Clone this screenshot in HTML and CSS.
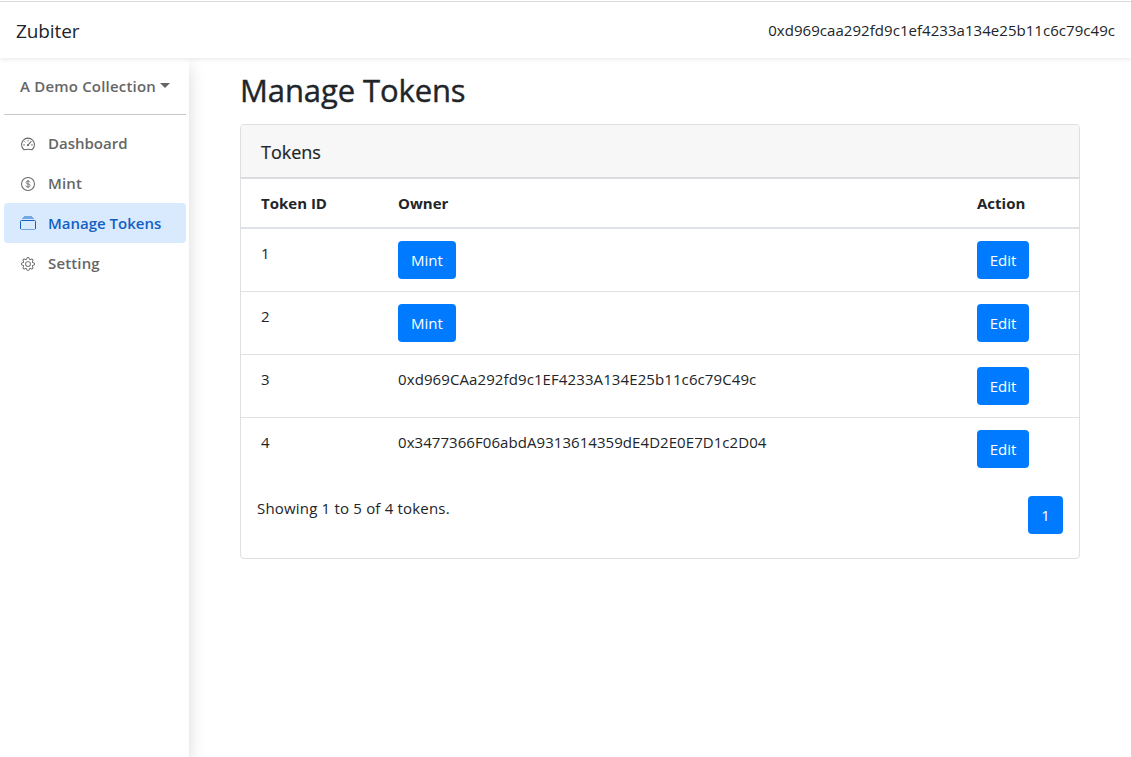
FILE: index.html
```html
<!DOCTYPE html>
<html lang="en">
<head>
<meta charset="utf-8">
<title>Zubiter</title>
<link rel="stylesheet" href="styles.css">
</head>
<body>
<header class="navbar">
  <a class="brand">Zubiter</a>
  <span class="account">0xd969caa292fd9c1ef4233a134e25b11c6c79c49c</span>
</header>
<div class="layout">
  <aside class="sidebar">
    <div class="collection"><span class="collection-name">A Demo Collection</span><i class="caret"></i></div>
    <nav class="menu">
      <a class="item">
        <svg class="icon" viewBox="0 0 16 16" fill="none" stroke="currentColor" stroke-linecap="round"><path d="M3.400 14.500C1.700 13.400.6 11.200.6 8.700a7.400 7.400 0 0 1 14.800 0c0 2.500-1.100 4.700-2.800 5.800-2.800-.7-6.400-.7-9.200 0z" stroke-width="1.200"/><path d="M8 3.700v1M4.300 5.300l.7.7M2.900 9h1.200M11.900 9h1.200"/><path d="M7.900 9.300l3.600-4" stroke-width="1.200"/><circle cx="7.800" cy="9.400" r=".6" fill="currentColor"/></svg>
        <span>Dashboard</span></a>
      <a class="item">
        <svg class="icon" viewBox="0 0 16 16" fill="none" stroke="currentColor"><circle cx="8" cy="8" r="7.400" stroke-width="1.150"/><path d="M10.200 6.100C10 5 9.100 4.500 8 4.500c-1.300 0-2.200.6-2.200 1.600 0 2.500 4.600 1.200 4.600 3.700 0 1.100-1 1.700-2.400 1.700-1.400 0-2.300-.7-2.400-1.800M8 3.500v9"/></svg>
        <span class="mint">Mint</span></a>
      <a class="item active">
        <svg class="icon icon-stack" viewBox="0 0 16 16"><path class="stack-lid" d="M4 1h8v1H4zM3 2h10v1h1v1H2V3h1z"/><path class="stack-box" d="M.5 14V6.500Q.5 5.500 1.500 5.500h13q1 0 1 1V14"/><path class="stack-lid" d="M1 14h14v1H1z"/></svg>
        <span>Manage Tokens</span></a>
      <a class="item">
        <svg class="icon" viewBox="0 0 16 16" fill="currentColor"><path d="M8 4.754a3.246 3.246 0 1 0 0 6.492 3.246 3.246 0 0 0 0-6.492zM5.754 8a2.246 2.246 0 1 1 4.492 0 2.246 2.246 0 0 1-4.492 0z"/><path d="M9.796 1.343c-.527-1.790-3.065-1.790-3.592 0l-.094.319a.873.873 0 0 1-1.255.520l-.292-.160c-1.640-.892-3.433.902-2.540 2.541l.159.292a.873.873 0 0 1-.520 1.255l-.319.094c-1.790.527-1.790 3.065 0 3.592l.319.094a.873.873 0 0 1 .520 1.255l-.160.292c-.892 1.640.901 3.434 2.541 2.540l.292-.159a.873.873 0 0 1 1.255.520l.094.319c.527 1.790 3.065 1.790 3.592 0l.094-.319a.873.873 0 0 1 1.255-.520l.292.160c1.640.893 3.434-.902 2.540-2.541l-.159-.292a.873.873 0 0 1 .520-1.255l.319-.094c1.790-.527 1.790-3.065 0-3.592l-.319-.094a.873.873 0 0 1-.520-1.255l.160-.292c.893-1.640-.902-3.433-2.541-2.540l-.292.159a.873.873 0 0 1-1.255-.520l-.094-.319zm-2.633.283c.246-.835 1.428-.835 1.674 0l.094.319a1.873 1.873 0 0 0 2.693 1.115l.291-.160c.764-.415 1.600.420 1.184 1.185l-.159.292a1.873 1.873 0 0 0 1.116 2.692l.318.094c.835.246.835 1.428 0 1.674l-.319.094a1.873 1.873 0 0 0-1.115 2.693l.160.291c.415.764-.420 1.600-1.185 1.184l-.291-.159a1.873 1.873 0 0 0-2.693 1.116l-.094.318c-.246.835-1.428.835-1.674 0l-.094-.319a1.873 1.873 0 0 0-2.692-1.115l-.292.160c-.764.415-1.600-.420-1.184-1.185l.159-.291A1.873 1.873 0 0 0 1.945 8.930l-.319-.094c-.835-.246-.835-1.428 0-1.674l.319-.094A1.873 1.873 0 0 0 3.060 4.377l-.160-.292c-.415-.764.420-1.600 1.185-1.184l.292.159a1.873 1.873 0 0 0 2.692-1.115l.094-.319z"/></svg>
        <span class="setting">Setting</span></a>
    </nav>
  </aside>
  <main class="main">
    <h1 class="title">Manage Tokens</h1>
    <section class="card">
      <h2 class="card-head">Tokens</h2>
      <div class="row head"><span>Token ID</span><span>Owner</span><span>Action</span></div>
      <div class="row"><span>1</span><div><button class="btn btn-mint">Mint</button></div><div><button class="btn btn-edit">Edit</button></div></div>
      <div class="row"><span>2</span><div><button class="btn btn-mint">Mint</button></div><div><button class="btn btn-edit">Edit</button></div></div>
      <div class="row"><span>3</span><span class="owner-a">0xd969CAa292fd9c1EF4233A134E25b11c6c79C49c</span><div><button class="btn btn-edit">Edit</button></div></div>
      <div class="row"><span>4</span><span class="owner-b">0x3477366F06abdA9313614359dE4D2E0E7D1c2D04</span><div><button class="btn btn-edit">Edit</button></div></div>
      <footer class="card-foot"><span class="summary">Showing 1 to 5 of 4 tokens.</span><button class="btn btn-page">1</button></footer>
    </section>
  </main>
</div>
</body>
</html>
```
FILE: styles.css
```css
* { box-sizing: border-box; }
body {
  margin: 0;
  height: 757px;
  overflow: hidden;
  display: flex;
  flex-direction: column;
  font: 400 15px/24px "Open Sans", "Noto Sans", sans-serif;
  color: #212529;
  background: #fff;
}
.navbar {
  position: relative;
  z-index: 2;
  flex: none;
  height: 58px;
  padding: 4px 16px 0;
  display: flex;
  align-items: center;
  justify-content: space-between;
  background: linear-gradient(#fff 1px, #dadcdc 1px, #dadcdc 2px, #fff 2px);
  box-shadow: 0 2px 4px rgba(0, 0, 0, .075);
}
.brand { font-size: 19px; letter-spacing: -.1px; }
.account { letter-spacing: .045px; padding-bottom: 2px; }
.layout { flex: 1; display: flex; min-height: 0; }
.sidebar {
  flex: none;
  width: 189px;
  padding: 0 3px 0 4px;
  box-shadow: 0 8px 16px rgba(0, 0, 0, .15);
  font-weight: 600;
  color: #666;
}
.collection {
  height: 57px;
  padding: 0 16px;
  display: flex;
  align-items: center;
  gap: 4px;
  border-bottom: 1px solid #c8c8c8;
}
.collection-name { letter-spacing: .19px; }
.caret {
  border: 5px solid transparent;
  border-top-color: #666;
  border-bottom: 0;
  margin-top: -2px;
}
.menu { padding-top: 8px; }
.item {
  height: 40px;
  padding: 0 16px;
  display: flex;
  align-items: center;
  gap: 12px;
  border-radius: 4px;
}
.item.active { background: #d9eaff; color: #1360c4; }
.mint, .setting { letter-spacing: .15px; }
.icon { width: 16px; height: 18px; padding: 2px 1px; margin-top: 1px; }
.icon-stack { height: 16px; padding: 0; margin-top: 0; }
.stack-lid { fill: #73a8e5; }
.stack-box { fill: none; stroke: #1360c4; }
.main { flex: 1; padding: 13px 51px 0; }
.title {
  margin: 0 0 15px;
  font-size: 31px;
  line-height: 38px;
  font-weight: 500;
  letter-spacing: -.1px;
  -webkit-text-stroke: .4px currentColor;
}
.card { width: 840px; height: 435px; border: 1px solid #dfdfdf; border-radius: 4px; overflow: hidden; }
.card-head {
  margin: 0;
  height: 54px;
  padding: 2px 20px 0;
  font-size: 18px;
  font-weight: 500;
  line-height: 50px;
  -webkit-text-stroke: .2px currentColor;
  background: #f7f7f7;
  border-bottom: 2px solid #dadce0;
}
.row {
  display: grid;
  grid-template-columns: 137px 579px 1fr;
  height: 63px;
  padding: 12px 20px;
  border-top: 1px solid #dee2e6;
  align-items: start;
}
.row.head { height: 48px; border-top: 0; font-weight: 700; }
.row.head + .row { height: 64px; border-top-width: 2px; padding-top: 12px; }
.owner-a { letter-spacing: .1px; }
.owner-b { letter-spacing: .06px; }
.btn {
  display: block;
  height: 38px;
  padding: 0 0 1px;
  border: 0;
  border-radius: 4px;
  background: #007bff;
  color: #fff;
  font: inherit;
}
.btn-mint { width: 58px; }
.btn-edit { width: 52px; }
.btn-page { width: 35px; }
.card-foot { display: flex; justify-content: space-between; padding: 16px; }
.summary { letter-spacing: .19px; }
```
